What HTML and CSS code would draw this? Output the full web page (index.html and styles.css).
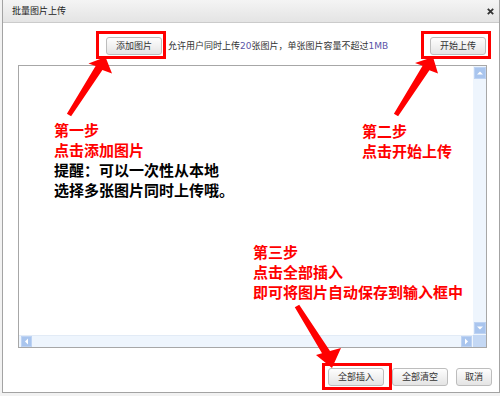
FILE: index.html
```html
<!DOCTYPE html>
<html lang="zh-CN">
<head>
<meta charset="utf-8">
<title>批量图片上传</title>
<link rel="stylesheet" href="styles.css">
</head>
<body>
<div class="dialog">
  <div class="titlebar">
    <span class="title">批量图片上传</span>
    <span class="close" aria-label="关闭">
      <svg width="7" height="7" viewBox="0 0 7 7"><path d="M0.8 0.8 L6.2 6.2 M6.2 0.8 L0.8 6.2" stroke="#333" stroke-width="1.8" fill="none"/></svg>
    </span>
  </div>
  <div class="toolbar">
    <button class="btn btn-add">添加图片</button>
    <span class="note">允许用户同时上传<span class="num">20</span>张图片，单张图片容量不超过<span class="num">1MB</span></span>
    <button class="btn btn-start">开始上传</button>
  </div>
  <div class="panel">
    <div class="stage">
      <div class="step step1">
        <div class="red">第一步</div>
        <div class="red">点击添加图片</div>
        <div>提醒：可以一次性从本地</div>
        <div>选择多张图片同时上传哦。</div>
      </div>
      <div class="step step2">
        <div class="red">第二步</div>
        <div class="red">点击开始上传</div>
      </div>
      <div class="step step3">
        <div class="red">第三步</div>
        <div class="red">点击全部插入</div>
        <div class="red">即可将图片自动保存到输入框中</div>
      </div>
    </div>
    <div class="vscroll">
      <span class="sbtn"><svg width="12" height="12" viewBox="0 0 12 12"><path d="M3 7.5 L6 4.5 L9 7.5 Z" fill="#fff"/></svg></span>
      <span class="sbtn"><svg width="12" height="12" viewBox="0 0 12 12"><path d="M3 4.5 L6 7.5 L9 4.5 Z" fill="#fff"/></svg></span>
    </div>
    <div class="hscroll">
      <span class="sbtn"><svg width="11" height="11" viewBox="0 0 11 11"><path d="M7 2.5 L4 5.5 L7 8.5 Z" fill="#fff"/></svg></span>
      <span class="sbtn"><svg width="11" height="11" viewBox="0 0 11 11"><path d="M4 2.5 L7 5.5 L4 8.5 Z" fill="#fff"/></svg></span>
    </div>
    <div class="corner"></div>
  </div>
  <div class="footer">
    <button class="btn">全部插入</button>
    <button class="btn">全部清空</button>
    <button class="btn btn-short">取消</button>
  </div>
</div>
<svg class="annotations" width="500" height="396" viewBox="0 0 500 396">
  <g fill="none" stroke="#f00" stroke-width="3">
    <rect x="97.5" y="32.5" width="67" height="25"/>
    <rect x="422.5" y="32.5" width="67" height="25"/>
    <rect x="323.5" y="364.5" width="67" height="24"/>
  </g>
  <g fill="#f00">
    <path d="M66.9 113.7 L95.6 65.9 L88.5 63.5 L105.5 57 L112 73.5 L102.4 70.1 L71.1 116.3 Z"/>
    <path d="M393.9 113.7 L422.6 65.8 L415 63 L433 57 L438 73.5 L429.4 70.2 L398.1 116.3 Z"/>
    <path d="M294.8 307.2 L322 353.3 L316 355 L332 368 L341 348 L330 351 L299.2 304.8 Z"/>
  </g>
</svg>
</body>
</html>
```
FILE: styles.css
```css
html, body {
  margin: 0;
  padding: 0;
}
body {
  width: 500px;
  height: 396px;
  position: relative;
  background: #f2f2f2;
  font-family: "Noto Sans CJK SC", "Liberation Sans", sans-serif;
  color: #333;
  overflow: hidden;
}
.dialog {
  box-sizing: border-box;
  margin-left: 2px;
  width: 498px;
  height: 393px;
  background: #fff;
  border: 1px solid #a3a3a3;
  border-top: none;
  display: flex;
  flex-direction: column;
}
.titlebar {
  height: 22px;
  flex: none;
  border-bottom: 1px solid #cbcbcb;
  background: linear-gradient(#f4f4f4, #e4e4e4);
  display: flex;
  align-items: center;
  justify-content: space-between;
  padding: 0 5px 0 9px;
}
.title {
  font-size: 9px;
  line-height: 22px;
  color: #222;
}
.close {
  display: flex;
  margin-top: 1px;
}
.toolbar {
  flex: none;
  margin-top: 14px;
  height: 18px;
  display: flex;
  align-items: center;
  padding: 0 13px 0 103px;
}
.btn {
  box-sizing: border-box;
  height: 18px;
  padding: 0 9px;
  margin: 0;
  border: 1px solid #bdbdbd;
  border-radius: 3px;
  background: linear-gradient(#fefefe, #e4e4e4);
  font-family: "Noto Sans CJK SC", "Liberation Sans", sans-serif;
  font-size: 9px;
  line-height: 16px;
  color: #333;
}
.btn-short {
  padding: 0 8px;
}
.note {
  margin-left: 6px;
  font-size: 9px;
  line-height: 18px;
  color: #333;
  white-space: nowrap;
}
.num {
  font-family: "DejaVu Sans", sans-serif;
  font-size: 9px;
  color: #5b55a8;
}
.btn-start {
  margin-left: auto;
}
.panel {
  flex: none;
  box-sizing: border-box;
  margin: 10px 12px 0 15px;
  height: 283px;
  border: 1px solid #a7a7a7;
  display: grid;
  grid-template-columns: 1fr 13px;
  grid-template-rows: 1fr 12px;
}
.stage {
  position: relative;
  background: #fff;
}
.step {
  position: absolute;
  font-size: 15px;
  line-height: 20px;
  font-weight: bold;
  color: #000;
  white-space: nowrap;
}
.red {
  color: #f00;
}
.step1 { left: 35px; top: 54px; }
.step2 { left: 343px; top: 55px; }
.step3 { left: 234px; top: 176px; }
.vscroll {
  background: #eef5fd;
  display: flex;
  flex-direction: column;
  justify-content: space-between;
  align-items: flex-end;
  padding: 1px 0;
}
.vscroll .sbtn {
  width: 12px;
  height: 12px;
}
.hscroll {
  background: #eef5fd;
  display: flex;
  justify-content: space-between;
  align-items: center;
  padding: 0 1px 0 2px;
  border-top: 1px solid #e2ebf6;
}
.hscroll .sbtn {
  width: 11px;
  height: 11px;
}
.sbtn {
  display: flex;
  box-sizing: border-box;
  background: #a9c5ee;
  border: 1px solid #bed3f3;
}
.sbtn svg {
  margin: -1px;
}
.corner {
  background: #c4d8f4;
}
.footer {
  flex: none;
  margin-top: 20px;
  display: flex;
  justify-content: flex-end;
  gap: 8px;
  padding-right: 7px;
}
.annotations {
  position: absolute;
  left: 0;
  top: 0;
  pointer-events: none;
}
```
